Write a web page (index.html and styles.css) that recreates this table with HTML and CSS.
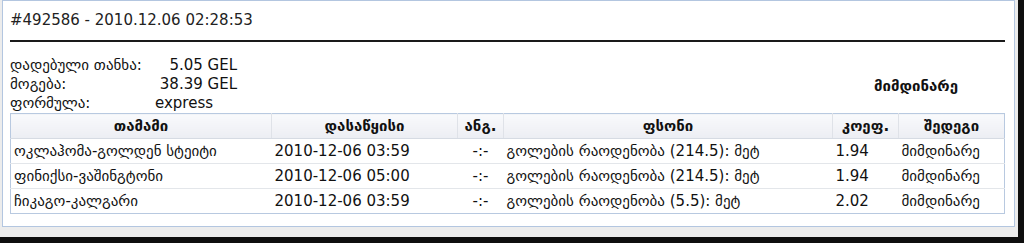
FILE: index.html
```html
<!DOCTYPE html>
<html lang="ka">
<head>
<meta charset="utf-8">
<title>#492586</title>
<link rel="stylesheet" href="styles.css">
</head>
<body>
<div class="window">
  <div class="panel">
    <div class="title">#492586 - 2010.12.06 02:28:53</div>
    <div class="rule"></div>
    <div class="summary">
      <div class="info">
        <span class="label">დადებული თანხა:</span><span class="val num">5.05 GEL</span>
        <span class="label">მოგება:</span><span class="val num">38.39 GEL</span>
        <span class="label">ფორმულა:</span><span class="val">express</span>
      </div>
      <div class="status">მიმდინარე</div>
    </div>
    <table class="bets">
      <colgroup>
        <col class="c-match"><col class="c-start"><col class="c-score"><col class="c-bet"><col class="c-odds"><col class="c-result">
      </colgroup>
      <thead>
        <tr><th>თამამი</th><th>დასაწყისი</th><th>ანგ.</th><th>ფსონი</th><th>კოეფ.</th><th>შედეგი</th></tr>
      </thead>
      <tbody>
        <tr><td>ოკლაჰომა-გოლდენ სტეიტი</td><td>2010-12-06 03:59</td><td class="center">-:-</td><td>გოლების რაოდენობა (214.5): მეტ</td><td>1.94</td><td>მიმდინარე</td></tr>
        <tr><td>ფინიქსი-ვაშინგტონი</td><td>2010-12-06 05:00</td><td class="center">-:-</td><td>გოლების რაოდენობა (214.5): მეტ</td><td>1.94</td><td>მიმდინარე</td></tr>
        <tr><td>ჩიკაგო-კალგარი</td><td>2010-12-06 03:59</td><td class="center">-:-</td><td>გოლების რაოდენობა (5.5): მეტ</td><td>2.02</td><td>მიმდინარე</td></tr>
      </tbody>
    </table>
  </div>
</div>
</body>
</html>
```
FILE: styles.css
```css
html, body {
  margin: 0;
  padding: 0;
  background: #0e0e0e;
  height: 243px;
  overflow: hidden;
}

body {
  font-family: "DejaVu Sans", "Noto Sans", sans-serif;
  font-size: 15px;
  color: #111;
}

.window {
  width: 1013px;
  height: 226px;
  padding: 0 3px 11px 2px;
  background: #ececec;
}

.panel {
  height: 206px;
  border: 1px solid #b3c6e0;
  background: #fff;
  padding: 10px 9px 9px 7px;
}

.title {
  line-height: 18px;
  color: #222;
}

.rule {
  height: 2px;
  background: #1a1a1a;
  margin-top: 11px;
}

.summary {
  display: flex;
  align-items: center;
  justify-content: space-between;
  margin-top: 14px;
}

.info {
  display: grid;
  grid-template-columns: 145px 82px;
  line-height: 19px;
}

.val.num {
  text-align: right;
}

.status {
  font-weight: bold;
  margin-right: 47px;
  padding-top: 3px;
}

.bets {
  width: 100%;
  border-collapse: collapse;
  table-layout: fixed;
  border: 1px solid #b8c9e0;
}

.c-match { width: 261px; }
.c-start { width: 186px; }
.c-score { width: 46px; }
.c-bet { width: 329px; }
.c-odds { width: 66px; }
.c-result { width: 106px; }

.bets th {
  height: 24px;
  padding: 0 3px;
  font-weight: bold;
  text-align: center;
  background: linear-gradient(#f9fafc, #eceef3);
  border-left: 1px solid #dfe2e8;
  border-bottom: 1px solid #d6dbe3;
}

.bets th:first-child {
  border-left: none;
}

.bets td {
  height: 24px;
  padding: 0 3px;
  white-space: nowrap;
  overflow: hidden;
  border-bottom: 1px solid #e3e6ea;
}

.bets tr:last-child td {
  border-bottom: none;
}

.bets td.center {
  text-align: center;
}
```
